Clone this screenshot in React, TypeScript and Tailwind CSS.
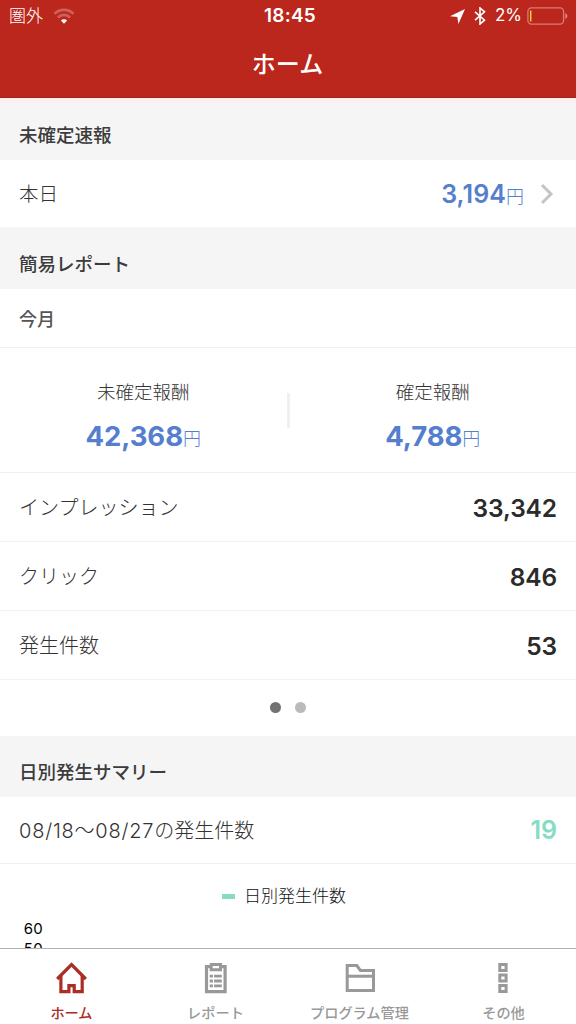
import type { ReactNode } from 'react';

type TabItem = {
  label: string;
  icon: ReactNode;
  active?: boolean;
};

const reportRows = [
  { label: 'インプレッション', value: '33,342' },
  { label: 'クリック', value: '846' },
  { label: '発生件数', value: '53' },
];

const tabs: TabItem[] = [
  { label: 'ホーム', icon: <HomeIcon />, active: true },
  { label: 'レポート', icon: <ReportIcon /> },
  { label: 'プログラム管理', icon: <FolderIcon /> },
  { label: 'その他', icon: <MoreIcon /> },
];

function HomeIcon() {
  return (
    <svg width="32" height="32" viewBox="0 0 32 32" fill="none" stroke="currentColor" strokeWidth="3.2">
      <path d="M1.200 17 15.500 2.600 29.800 17" />
      <path d="M4.900 14v15.700h8v-6h5.300v6h8V14" />
    </svg>
  );
}

function ReportIcon() {
  return (
    <svg width="32" height="32" viewBox="0 0 32 32" fill="none" stroke="currentColor">
      <path d="M6.500 4.700h18.600v25H6.500z" strokeWidth="3.200" />
      <path d="M11.200 2.400h9.300v5.400h-9.300z" fill="#fff" strokeWidth="3" />
      <path d="M9.700 14.200h3.200M14.100 14.200h7.700M9.700 19h3.200M14.100 19h7.700M9.700 23.800h3.200M14.100 23.800h7.700" strokeWidth="2.800" />
    </svg>
  );
}

function FolderIcon() {
  return (
    <svg width="32" height="32" viewBox="0 0 32 32" fill="none" stroke="currentColor" strokeWidth="3">
      <path d="M3.200 28.500v-25h9.600l3.600 4.900h13.100v20.100z" />
      <path d="M3.200 14.200h26.300" />
    </svg>
  );
}

function MoreIcon() {
  return (
    <svg width="32" height="32" viewBox="0 0 32 32" fill="none" stroke="currentColor" strokeWidth="3">
      <path d="M11.800 2.500h6.300v6.100h-6.300zM11.800 13h6.300v6.100h-6.300zM11.800 23.500h6.300v6.100h-6.300z" />
    </svg>
  );
}

function StatusBar() {
  return (
    <div className="grid h-8 grid-cols-3 items-center pl-[9px] pr-2 text-white">
      <div className="flex items-center gap-[10px]">
        <span className="pt-[2px] text-[17px] font-light">圏外</span>
        <svg width="22" height="17" viewBox="0 0 22 17" fill="none" stroke="#fff">
          <path d="M1.500 5.800a13.400 13.400 0 0 1 19 0" strokeWidth="2.800" opacity=".27" />
          <path d="M4.900 9.400a8.600 8.600 0 0 1 12.200 0" strokeWidth="2.800" opacity=".27" />
          <path d="M11 15.800 7.900 12.600a4.400 4.400 0 0 1 6.200 0z" fill="#fff" stroke="none" />
        </svg>
      </div>
      <span className="pl-[3px] text-center text-[19px] font-semibold tracking-[0.2px]">18:45</span>
      <div className="flex items-center justify-end">
        <svg width="15" height="15" viewBox="0 0 15 15" fill="#fff" className="mr-[9px]">
          <path d="M15 0 8.400 15 7.300 8.100 0 7.300z" />
        </svg>
        <svg width="12" height="18" viewBox="0 0 12 18" fill="none" stroke="#fff" strokeWidth="1.600" className="mr-[9px]">
          <path d="m1 4.800 9.500 8.400L6 17V1l4.500 3.800L1 13.200" />
        </svg>
        <span className="mr-[5px] text-[17px]">2%</span>
        <svg width="41" height="18" viewBox="0 0 41 18" fill="none">
          <rect x=".9" y=".9" width="35.700" height="16.200" rx="3.600" stroke="#fff" strokeOpacity=".4" strokeWidth="1.300" />
          <path d="M38.200 6v6c3-1 3-5 0-6z" fill="#fff" fillOpacity=".4" />
          <path d="M3.700 3.500v11" stroke="#f5cf3c" strokeWidth="1.500" />
        </svg>
      </div>
    </div>
  );
}

function SectionTitle({ children }: { children: ReactNode }) {
  return (
    <h2 className="flex h-full items-center bg-[#f5f5f5] pl-[19px] pt-[13px] text-[18.500px] font-medium text-[#3c3c3c]">
      {children}
    </h2>
  );
}

function Reward({ label, amount }: { label: string; amount: string }) {
  return (
    <div className="flex flex-1 flex-col items-center pt-[30px]">
      <span className="h-[28px] text-[18.500px] leading-[28px] font-light text-[#333]">{label}</span>
      <span className="mt-[12px] flex items-baseline leading-[36px] text-[#557fce]">
        <span className="text-[27.500px] font-bold tracking-[-0.1px]">{amount}</span>
        <span className="relative -top-px text-[18px] font-light">円</span>
      </span>
    </div>
  );
}

export default function App() {
  return (
    <div className="flex h-[1024px] w-[576px] flex-col overflow-hidden bg-white font-['Inter','Noto_Sans_CJK_JP',sans-serif]">
      <header className="h-[98px] shrink-0 border-b border-[#a5261d] bg-[#bb271c]">
        <StatusBar />
        <h1 className="pr-px text-center text-[24px] leading-[66px] font-medium text-white">ホーム</h1>
      </header>

      <main className="min-h-0 flex-1 overflow-hidden">
        <div className="h-[62px] border-t-[5px] border-[#fbf0ee]">
          <h2 className="flex h-full items-center bg-[#f5f5f5] pt-[8px] pl-[19px] text-[18.500px] font-medium text-[#3c3c3c]">
            未確定速報
          </h2>
        </div>
        <div className="flex h-[67px] items-center justify-between pl-[19px] pr-[22px]">
          <span className="pt-[2px] text-[19.500px] font-light text-[#333]">本日</span>
          <div className="flex items-center">
            <span className="flex items-baseline pt-[2px] text-[#557fce]">
              <span className="text-[25px] font-semibold tracking-[0.1px]">3,194</span>
              <span className="text-[18px] font-light">円</span>
            </span>
            <svg width="14" height="22" viewBox="0 0 14 22" fill="none" stroke="#c4c4c6" strokeWidth="3" className="ml-4">
              <path d="m2 2 9 9-9 9" />
            </svg>
          </div>
        </div>

        <div className="h-[62px]">
          <SectionTitle>簡易レポート</SectionTitle>
        </div>
        <div className="flex h-[59px] items-center border-b border-[#f0f0f0] pt-[2px] pl-[19px] text-[18px] font-medium text-[#555]">
          今月
        </div>
        <div className="flex h-[125px] items-start border-b border-[#f0f0f0]">
          <Reward label="未確定報酬" amount="42,368" />
          <div className="mt-[45px] h-[35px] w-[3px] bg-[#f0f0f0]" />
          <Reward label="確定報酬" amount="4,788" />
        </div>
        {reportRows.map((row) => (
          <div
            key={row.label}
            className="flex h-[69px] items-center justify-between border-b border-[#f2f2f2] px-[19px] pt-[2px]"
          >
            <span className="text-[20px] font-light text-[#333]">{row.label}</span>
            <span className="text-[24.500px] font-semibold tracking-[-0.1px] text-[#2b2b2b]">{row.value}</span>
          </div>
        ))}
        <div className="flex h-[56px] items-center justify-center gap-[14px] pr-px pb-[2px]">
          <span className="size-[11px] rounded-full bg-[#727272]" />
          <span className="size-[11px] rounded-full bg-[#bababa]" />
        </div>

        <div className="h-[61px]">
          <SectionTitle>日別発生サマリー</SectionTitle>
        </div>
        <div className="flex h-[67px] items-center justify-between border-b border-[#f0f0f0] px-[19px] pt-[2px]">
          <span className="text-[20px] font-light text-[#333]">
            <span className="tracking-[0.78px]">08/18〜08/27</span>の発生件数
          </span>
          <span className="text-[25px] font-semibold text-[#86dcc2]">19</span>
        </div>
        <div className="pt-[18px]">
          <div className="flex h-[28px] items-center justify-center gap-[9px] pr-[8px] text-[17px] font-light text-[#111]">
            <span className="h-[5px] w-[13px] bg-[#86dcc2]" />
            <span className="pt-[2px]">日別発生件数</span>
          </div>
          <div className="mt-[9px] w-[43px] text-right text-[15px] leading-[20px] tracking-[0.3px] text-black">
            <div>60</div>
            <div>50</div>
          </div>
        </div>
      </main>

      <nav className="grid h-[76px] shrink-0 grid-cols-4 border-t border-[#b2b2b2] bg-white">
        {tabs.map((tab) => (
          <button
            key={tab.label}
            className={`flex flex-col items-center pt-[13px] pr-px ${tab.active ? 'text-[#aa2e26]' : 'text-[#999]'}`}
          >
            {tab.icon}
            <span className="mt-[9px] text-[14.200px] leading-[20px] font-medium whitespace-nowrap">{tab.label}</span>
          </button>
        ))}
      </nav>
    </div>
  );
}
